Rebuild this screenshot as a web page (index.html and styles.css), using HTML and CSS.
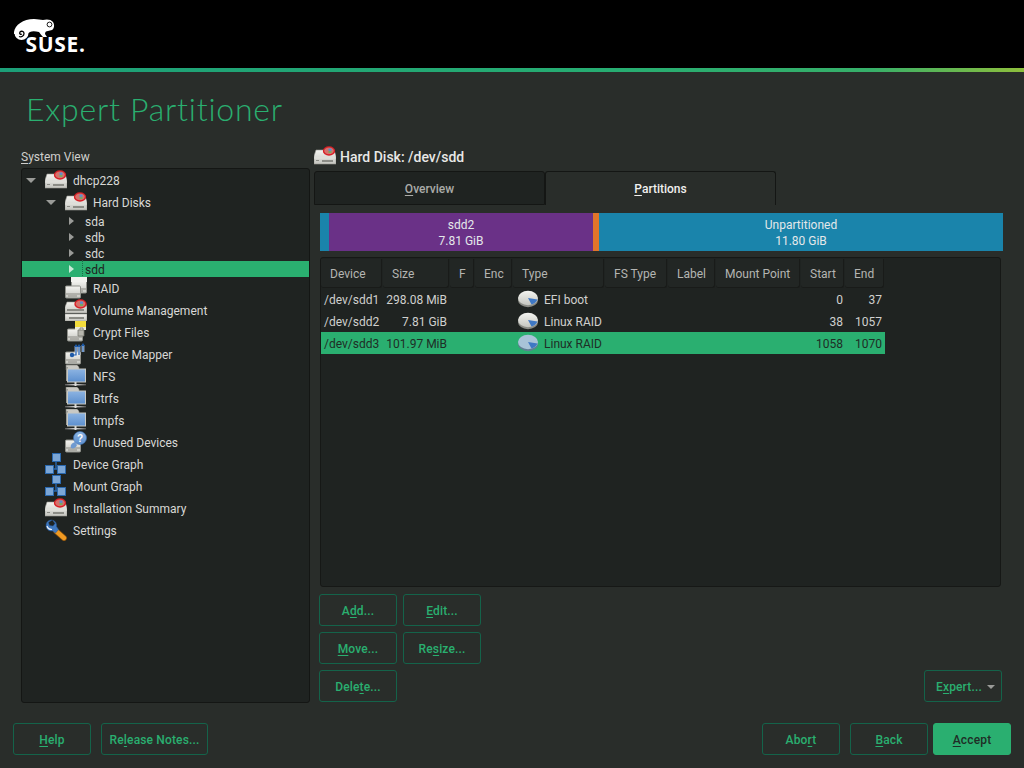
FILE: index.html
```html
<!DOCTYPE html>
<html lang="en">
<head>
<meta charset="utf-8">
<title>Expert Partitioner</title>
<link rel="stylesheet" href="styles.css">
</head>
<body>
<svg class="defs" aria-hidden="true">
  <defs>
    <linearGradient id="case" x1="0" y1="0" x2="0" y2="1"><stop offset="0" stop-color="#f4f4f0"/><stop offset="1" stop-color="#c4c5bf"/></linearGradient>
    <linearGradient id="blue" x1="0" y1="0" x2="0" y2="1"><stop offset="0" stop-color="#8db4e2"/><stop offset="1" stop-color="#5c8fce"/></linearGradient>
    <linearGradient id="netline" x1="0" y1="0" x2="1" y2="0"><stop offset="0" stop-color="#555"/><stop offset=".5" stop-color="#ddd"/><stop offset="1" stop-color="#555"/></linearGradient>
    <symbol id="box" viewBox="0 0 16 13"><rect x=".5" y=".5" width="15" height="12" rx="1" fill="url(#case)" stroke="#8f908a"/><rect x="1" y="8" width="14" height="1" fill="#8b8c86"/><rect x="3" y="10" width="9" height="1" fill="#8b8c86"/></symbol>
    <symbol id="badge" viewBox="0 0 13 10"><ellipse cx="6.5" cy="5" rx="6.2" ry="4.7" fill="#d81f26"/><ellipse cx="6.5" cy="4.8" rx="4.8" ry="3.4" fill="#d5726c"/><rect x="6" y="2.5" width="3" height="2.4" fill="#5c8fce"/><rect x="6" y="5" width="3" height="2" fill="#7aa860"/></symbol>
    <symbol id="disk" viewBox="0 0 22 22"><path d="M2 5h18l2 6v8H0v-8z" fill="url(#case)" stroke="#9a9b95" stroke-width=".6"/><rect x="0" y="12.500" width="22" height="1" fill="#e4e4de"/><rect x="8" y="15" width="11" height="2" fill="#8b8c86"/><rect x="2" y="15" width="3" height="1" fill="#8b8c86"/><use href="#badge" x="8.500" y="1" width="13" height="10"/></symbol>
    <symbol id="raid" viewBox="0 0 22 22"><use href="#box" x="6" y="0" width="16" height="20"/><rect x="6" y="-1" width="16" height="6" fill="#f2f2ee"/><use href="#box" x="0" y="8" width="16" height="14"/></symbol>
    <symbol id="volume" viewBox="0 0 22 22"><path d="M2 3h18l2 5v6H0V8z" fill="url(#case)" stroke="#9a9b95" stroke-width=".6"/><rect x="2" y="10" width="17" height="2" fill="#8b8c86"/><rect x="0" y="15" width="22" height="7" fill="url(#case)" stroke="#9a9b95" stroke-width=".6"/><rect x="4" y="18" width="15" height="2" fill="#8b8c86"/><use href="#badge" x="9" y="0" width="13" height="10"/></symbol>
    <symbol id="crypt" viewBox="0 0 22 22"><use href="#box" x="2" y="7" width="16" height="14"/><rect x="10" y="0" width="11" height="8" fill="#f2dc3c"/><rect x="10" y="6" width="11" height="3" fill="#e8e8d8"/><path d="M13 9h6v6h-6z" fill="#b6b6ae" stroke="#77776f" stroke-width=".8"/><path d="M15 9v-2h3v2" fill="none" stroke="#888" stroke-width="1"/></symbol>
    <symbol id="mapper" viewBox="0 0 22 22"><use href="#box" x="0" y="8" width="16" height="14"/><path d="M7 12h4V3M14 12V3M18 9V2" fill="none" stroke="#e8f0fa" stroke-width="2.6"/><path d="M7 12h4V3M14 12V3M18 9V2" fill="none" stroke="#1d5aa8" stroke-width="1.2"/><path d="M9 4l2-3 2 3M12 4l2-3 2 3M16 3l2-3 2 3" fill="#1d5aa8"/><circle cx="7" cy="12" r="2.2" fill="#1d5aa8"/></symbol>
    <symbol id="folder" viewBox="0 0 22 22"><path d="M1 0h11l2 2v3H1z" fill="#c9c9c4" stroke="#77776f" stroke-width=".6"/><rect x="1" y="2" width="2" height="14" fill="#9a9b95"/><rect x="2.5" y="4" width="18" height="13" fill="url(#blue)" stroke="#c8c8c2"/><rect x="9.5" y="17" width="2" height="4" fill="#d8d8d2"/><rect x="0" y="19" width="21" height="1.4" fill="url(#netline)"/></symbol>
    <symbol id="unused" viewBox="0 0 22 22"><use href="#box" x="0" y="8" width="16" height="14"/><circle cx="15" cy="7" r="6.5" fill="url(#blue)" stroke="#3a70b4" stroke-width=".6"/><path d="M10 11c-3 1-5 3-4 6 2 1 5 0 6-3z" fill="#6f9ad0"/><text x="15" y="10.5" class="qmark">?</text></symbol>
    <symbol id="graph" viewBox="0 0 22 22"><path d="M11 8v8M5 16h12" stroke="#2a68ae" stroke-width="1.4" fill="none"/><rect x="7.5" y=".5" width="8" height="8" fill="#7ba6d6" stroke="#2a68ae"/><rect x=".5" y="12.5" width="8" height="8" fill="#7ba6d6" stroke="#2a68ae"/><rect x="12.5" y="12.5" width="8" height="8" fill="#7ba6d6" stroke="#2a68ae"/></symbol>
    <symbol id="wrench" viewBox="0 0 22 22"><path d="M11 12l8 7" stroke="#7a4a10" stroke-width="6" stroke-linecap="round"/><path d="M11 12l8 7" stroke="#f09a22" stroke-width="4.4" stroke-linecap="round"/><path d="M7 1C3.500 1 1 3 1 6.500c0 3.500 3 6 6.500 5.500l3 2 3-3.500-2-3c.5-3-1-5.500-4-6.500l2.500 3.500-2 2.500-3.500-.5L3.500 3.500z" fill="#3f78bf" stroke="#24528e" stroke-width=".5"/><path d="M2 7c.5 2 2.500 3.500 5 3.500" stroke="#e6eef8" stroke-width="1.200" fill="none"/></symbol>
    <symbol id="pie" viewBox="0 0 22 18"><ellipse cx="11" cy="10" rx="10" ry="7.200" fill="#8a8b85"/><ellipse cx="11" cy="8" rx="10" ry="7.200" fill="url(#case)"/><path d="M11 8l9.500 1.600c-1 2.500-3.500 4.400-6 5z" fill="#3f78c4"/></symbol>
    <symbol id="pie-sel" viewBox="0 0 22 18"><ellipse cx="11" cy="10" rx="10" ry="7.200" fill="#5f7f92"/><ellipse cx="11" cy="8" rx="10" ry="7.200" fill="#a9c3d8"/><path d="M11 8l9.500 1.600c-1 2.500-3.500 4.400-6 5z" fill="#3f78c4"/></symbol>
  </defs>
</svg>

<div class="app">
  <header class="topbar">
    <svg class="logo" viewBox="0 0 74 42" role="img" aria-label="SUSE">
      <path d="M0 13C1 6 9 0 20 0c4 0 6 1 9 1 3-1 8-1 10 2 2 3 1 7-1 8l-4 1c-2 0-3 1-3 3l2 3h-4c-2-2-3-4-4-5-4-1-7-1-9 0l-3 2H0z" fill="#fff"/>
      <circle cx="7.500" cy="14" r="7" fill="#fff"/>
      <path d="M8 15c-1.500 1-3-.5-2-2 1.500-1.500 4-.5 4 1.500 0 2.500-2.500 4-5 3" fill="none" stroke="#000" stroke-width="1.300"/>
      <circle cx="35.500" cy="5.500" r="2.400" fill="none" stroke="#000" stroke-width=".9"/>
      <text x="11.500" y="33" class="logo-text">SUSE.</text>
    </svg>
  </header>

  <h1 class="page-title">Expert Partitioner</h1>

  <main class="main">
    <section class="side">
      <div class="side-label"><span class="u">S</span>ystem View</div>
      <div class="tree">
        <div class="row lvl0"><i class="tri down"></i><svg class="ico"><use href="#disk"/></svg><span>dhcp228</span></div>
        <div class="row lvl1"><i class="tri down"></i><svg class="ico"><use href="#disk"/></svg><span>Hard Disks</span></div>
        <div class="row dev"><i class="tri right"></i><span>sda</span></div>
        <div class="row dev"><i class="tri right"></i><span>sdb</span></div>
        <div class="row dev"><i class="tri right"></i><span>sdc</span></div>
        <div class="row dev selected"><i class="tri right"></i><span class="focus">sdd</span></div>
        <div class="row lvl1"><i class="tri none"></i><svg class="ico"><use href="#raid"/></svg><span>RAID</span></div>
        <div class="row lvl1"><i class="tri none"></i><svg class="ico"><use href="#volume"/></svg><span>Volume Management</span></div>
        <div class="row lvl1"><i class="tri none"></i><svg class="ico"><use href="#crypt"/></svg><span>Crypt Files</span></div>
        <div class="row lvl1"><i class="tri none"></i><svg class="ico"><use href="#mapper"/></svg><span>Device Mapper</span></div>
        <div class="row lvl1"><i class="tri none"></i><svg class="ico"><use href="#folder"/></svg><span>NFS</span></div>
        <div class="row lvl1"><i class="tri none"></i><svg class="ico"><use href="#folder"/></svg><span>Btrfs</span></div>
        <div class="row lvl1"><i class="tri none"></i><svg class="ico"><use href="#folder"/></svg><span>tmpfs</span></div>
        <div class="row lvl1"><i class="tri none"></i><svg class="ico"><use href="#unused"/></svg><span>Unused Devices</span></div>
        <div class="row lvl0"><i class="tri none"></i><svg class="ico"><use href="#graph"/></svg><span>Device Graph</span></div>
        <div class="row lvl0"><i class="tri none"></i><svg class="ico"><use href="#graph"/></svg><span>Mount Graph</span></div>
        <div class="row lvl0"><i class="tri none"></i><svg class="ico"><use href="#disk"/></svg><span>Installation Summary</span></div>
        <div class="row lvl0"><i class="tri none"></i><svg class="ico"><use href="#wrench"/></svg><span>Settings</span></div>
      </div>
    </section>

    <section class="content">
      <div class="disk-head"><svg class="ico"><use href="#disk"/></svg><span>Hard Disk: /dev/sdd</span></div>
      <div class="tabs">
        <div class="tab"><span class="u">O</span>verview</div>
        <div class="tab active"><span class="u">P</span>artitions</div>
      </div>
      <div class="bar">
        <div class="seg seg-efi"></div>
        <div class="seg seg-raid">sdd2<br>7.81 GiB</div>
        <div class="seg seg-small"></div>
        <div class="seg seg-free">Unpartitioned<br>11.80 GiB</div>
      </div>
      <div class="table">
        <div class="tr thead">
          <div class="th">Device</div><div class="th">Size</div><div class="th">F</div><div class="th">Enc</div><div class="th">Type</div><div class="th">FS Type</div><div class="th">Label</div><div class="th">Mount Point</div><div class="th">Start</div><div class="th">End</div>
        </div>
        <div class="tr">
          <div class="td">/dev/sdd1</div><div class="td num">298.08 MiB</div><div class="td"></div><div class="td"></div><div class="td type"><svg class="pie"><use href="#pie"/></svg>EFI boot</div><div class="td"></div><div class="td"></div><div class="td"></div><div class="td num start">0</div><div class="td num">37</div>
        </div>
        <div class="tr">
          <div class="td">/dev/sdd2</div><div class="td num">7.81 GiB</div><div class="td"></div><div class="td"></div><div class="td type"><svg class="pie"><use href="#pie"/></svg>Linux RAID</div><div class="td"></div><div class="td"></div><div class="td"></div><div class="td num start">38</div><div class="td num">1057</div>
        </div>
        <div class="tr selected">
          <div class="td">/dev/sdd3</div><div class="td num">101.97 MiB</div><div class="td"></div><div class="td"></div><div class="td type"><svg class="pie"><use href="#pie-sel"/></svg>Linux RAID</div><div class="td"></div><div class="td"></div><div class="td"></div><div class="td num start">1058</div><div class="td num">1070</div>
        </div>
      </div>
      <div class="actions">
        <div class="action-grid">
          <button class="btn">A<span class="u">d</span>d...</button>
          <button class="btn"><span class="u">E</span>dit...</button>
          <button class="btn"><span class="u">M</span>ove...</button>
          <button class="btn">Re<span class="u">s</span>ize...</button>
          <button class="btn">Dele<span class="u">t</span>e...</button>
        </div>
        <button class="btn expert">E<span class="u">x</span>pert...<i class="tri down small"></i></button>
      </div>
    </section>
  </main>

  <footer class="footer">
    <button class="btn"><span class="u">H</span>elp</button>
    <button class="btn notes">Re<span class="u">l</span>ease Notes...</button>
    <div class="spacer"></div>
    <button class="btn">Abo<span class="u">r</span>t</button>
    <button class="btn back"><span class="u">B</span>ack</button>
    <button class="btn primary"><span class="u">A</span>ccept</button>
  </footer>
</div>
</body>
</html>
```

FILE: styles.css
```css
* { box-sizing: border-box; }
html, body { margin: 0; padding: 0; }
body {
  width: 1024px;
  height: 768px;
  overflow: hidden;
  background: #292d2a;
  color: #d8d8d6;
  font: 12px/16px Roboto, "Liberation Sans", sans-serif;
}
.defs { position: absolute; width: 0; height: 0; }
.app { display: flex; flex-direction: column; height: 768px; }

.topbar {
  height: 72px;
  flex: none;
  background: #000;
  border-bottom: 4px solid;
  border-image: linear-gradient(90deg, #1c9f78 0%, #27ad72 60%, #37b06a 85%, #8fbf3c 100%) 1;
  padding: 19px 0 0 14px;
}
.logo { display: block; width: 74px; height: 42px; }
.logo-text { font: 700 21px "Open Sans", sans-serif; fill: #fff; letter-spacing: .7px; }
.qmark { font: 700 10px "Liberation Sans", sans-serif; fill: #fff; text-anchor: middle; }

.page-title {
  margin: 0;
  padding: 17px 0 0 26px;
  height: 75px;
  flex: none;
  font: 300 32px/40px Lato, sans-serif;
  letter-spacing: .75px;
  color: #2aaf70;
}

.u { text-decoration: underline; text-underline-offset: 2px; }

.main { display: flex; gap: 4px; padding-left: 21px; height: 556px; flex: none; }

.side { width: 289px; flex: none; }
.side-label { height: 21px; padding-top: 2px; line-height: 16px; color: #cfcfcc; }
.tree {
  height: 535px;
  background: #1f2321;
  border: 1px solid #141614;
  border-radius: 3px;
  color: #d8d8d6;
}
.row { display: flex; align-items: center; height: 22px; }
.row > span { padding-top: 2px; }
.row.lvl1 { padding-left: 20px; }
.row.dev { height: 16px; padding-left: 47px; }
.row.selected { background: #2aaf70; color: #1f2321; }
.ico { width: 22px; height: 22px; flex: none; display: block; }
.row .ico { margin-right: 6px; }

.tri { display: block; flex: none; width: 0; height: 0; border-style: solid; border-color: transparent; }
.tri.down { margin: 0 9px 0 4px; border-width: 5px 5px 0; border-top-color: #9a9b98; }
.tri.right { margin-right: 11px; border-width: 4px 0 4px 5px; border-left-color: #9a9b98; }
.row.selected .tri.right { border-left-color: #c9e9d8; }
.tri.none { width: 23px; }
.focus { border-left: 1px dotted #1d6a48; margin-left: -3px; padding-left: 2px; }

.content { width: 689px; flex: none; }
.disk-head {
  display: flex;
  align-items: center;
  gap: 4px;
  height: 24px;
  padding-bottom: 4px;
  font-size: 14px;
  font-weight: 500;
  color: #e8e8e6;
}
.disk-head .ico { margin-top: -2px; }
.tabs { display: flex; height: 34px; }
.tab {
  width: 231px;
  text-align: center;
  padding-top: 9px;
  font-weight: 500;
  border: 1px solid #141614;
  border-radius: 3px 3px 0 0;
  background: #1f2321;
  color: #aaaba8;
}
.tab.active { background: #292d2a; color: #f0f0ee; border-bottom: 0; }

.bar {
  display: flex;
  width: 683px;
  height: 38px;
  margin: 8px 0 0 6px;
  text-align: center;
  line-height: 16px;
  color: #e4e8ea;
}
.seg { padding-top: 4px; }
.seg-efi { width: 9px; background: #1a84ab; }
.seg-raid { width: 264px; background: #6a3187; }
.seg-small { width: 6px; background: #e0752a; }
.seg-free { flex: 1; background: #1a84ab; }

.table {
  width: 681px;
  height: 330px;
  margin: 6px 0 0 6px;
  background: #1f2321;
  border: 1px solid #161816;
  border-radius: 3px;
  padding-top: 1px;
}
.tr {
  display: grid;
  grid-template-columns: 62px 67px 25px 38px 92px 63px 48px 85px 44px 40px;
  width: 564px;
  height: 22px;
  padding-top: 2px;
  align-items: center;
  color: #d0d0ce;
}
.tr.thead { height: 29px; padding-top: 0; align-items: stretch; color: #b4b5b2; }
.th {
  padding: 7px 0 0 9px;
  margin-right: 1px;
  border: 1px solid #191b19;
  border-top: 0;
  border-left: 0;
  border-radius: 0 0 3px 3px;
  background: #222624;
}
.td { padding: 0 0 0 3px; white-space: nowrap; }
.td.num { padding: 0 3px 0 0; text-align: right; }
.td.num.start { padding-right: 2px; }
.td.type { display: flex; align-items: center; padding-left: 4px; }
.pie { width: 22px; height: 18px; margin-right: 5px; margin-top: -2px; flex: none; }
.tr.selected { background: #2aaf70; color: #1f2d26; }

.actions { display: flex; justify-content: space-between; align-items: flex-end; width: 683px; margin: 7px 0 0 5px; }
.action-grid { display: grid; grid-template-columns: 78px 78px; grid-auto-rows: 32px; gap: 6px; }
.btn {
  width: 78px;
  height: 32px;
  padding: 1px 0 0;
  background: transparent;
  border: 1px solid #14634a;
  border-radius: 3px;
  color: #2aaf70;
  font: 500 12px/16px Roboto, "Liberation Sans", sans-serif;
  letter-spacing: .15px;
  text-align: center;
}
.expert { display: flex; align-items: center; justify-content: flex-start; padding-left: 11px; }
.tri.small { margin: 0 0 0 5px; border-width: 4px 4px 0; }

.footer { display: flex; height: 32px; flex: none; margin-top: 20px; padding: 0 13px; }
.notes { width: 107px; margin-left: 10px; }
.spacer { flex: 1; }
.back { margin-left: 10px; margin-right: 5px; }
.primary { background: #2aaf70; border-color: #2aaf70; color: #1f2d26; }
```
